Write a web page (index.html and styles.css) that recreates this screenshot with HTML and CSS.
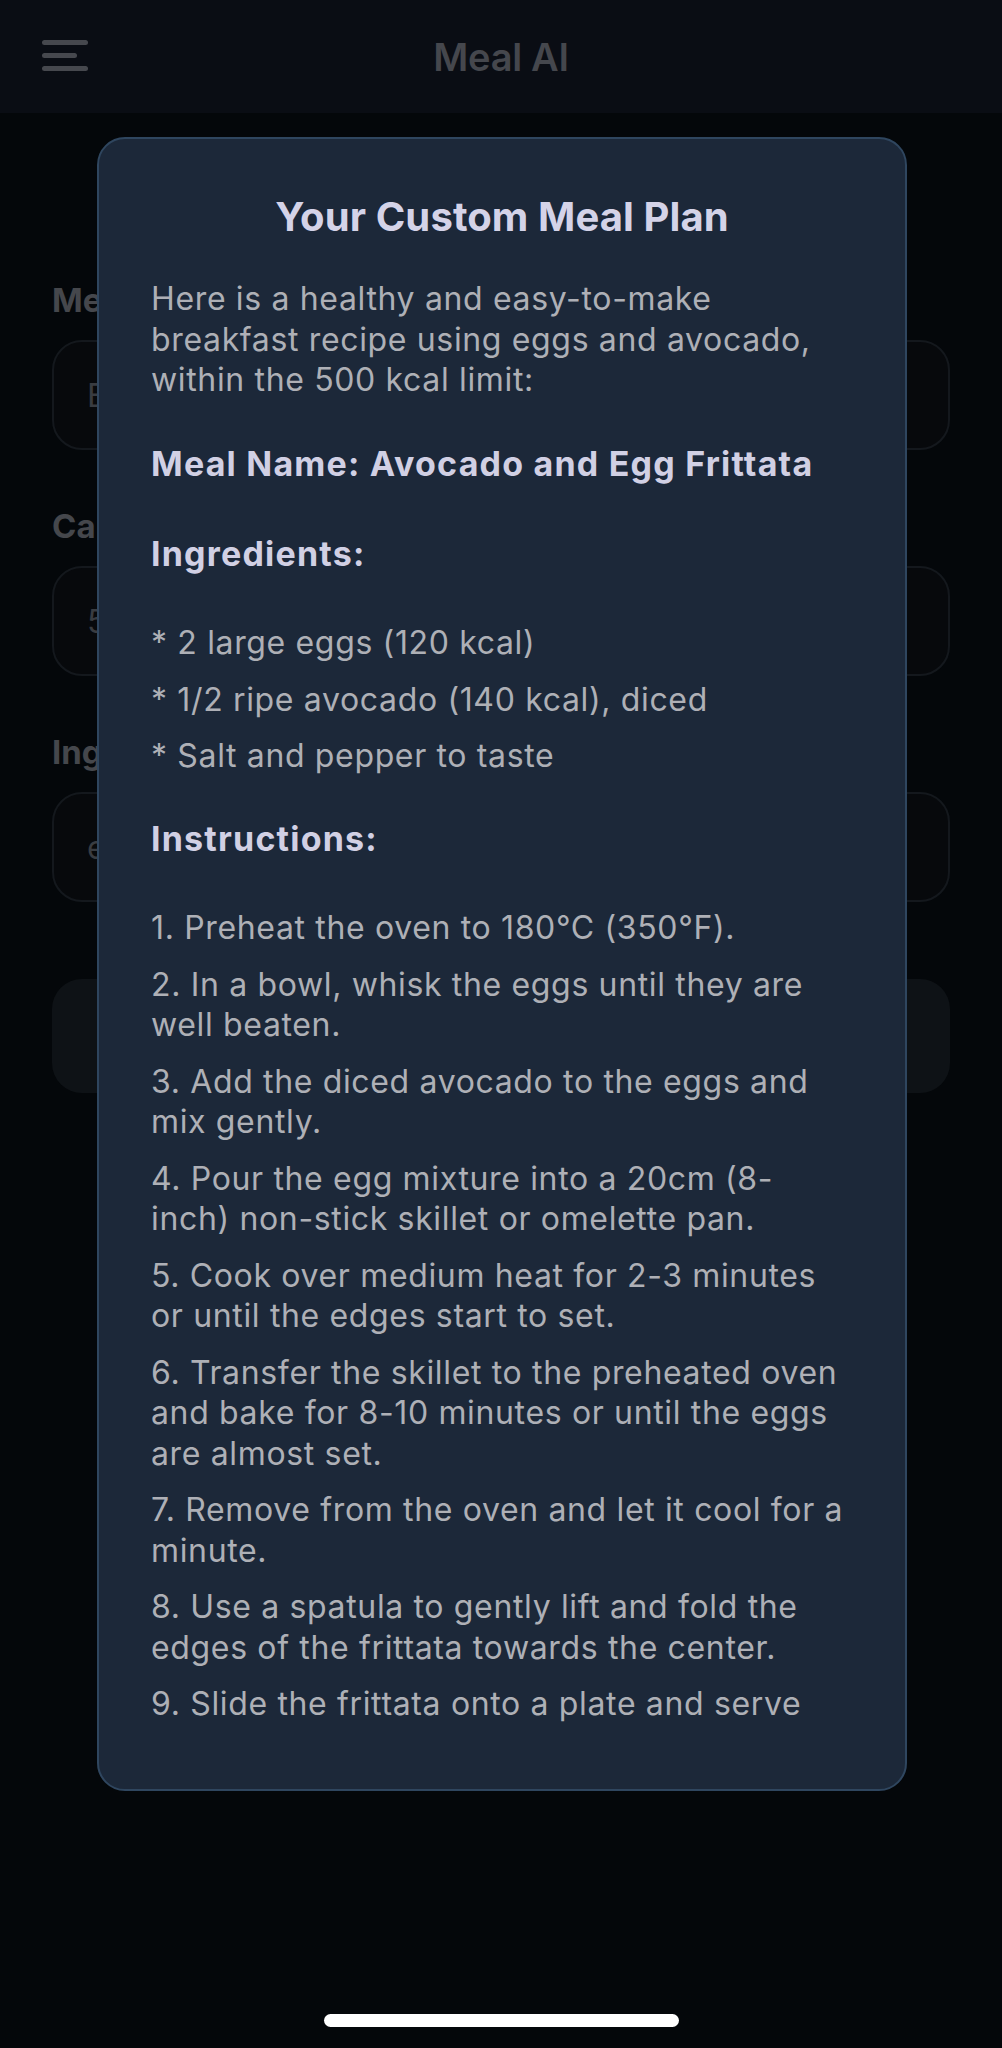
FILE: index.html
```html
<!DOCTYPE html>
<html lang="en">
<head>
<meta charset="utf-8">
<title>Meal AI</title>
<link rel="stylesheet" href="styles.css">
</head>
<body>
<div class="screen">
  <header class="topbar">
    <div class="menu" aria-label="Menu">
      <span class="bar"></span>
      <span class="bar short"></span>
      <span class="bar"></span>
    </div>
    <div class="app-title">Meal AI</div>
    <div class="spacer"></div>
  </header>

  <main class="form">
    <label class="field-label">Meal Type</label>
    <div class="input">Breakfast</div>

    <label class="field-label">Calories</label>
    <div class="input">500</div>

    <label class="field-label">Ingredients</label>
    <div class="input">eggs, avocado</div>

    <div class="button">Generate Meal Plan</div>
  </main>

  <section class="modal">
    <h1 class="modal-title">Your Custom Meal Plan</h1>
    <div class="scroll">
      <p class="txt">Here is a healthy and easy-to-make<br>breakfast recipe using eggs and avocado,<br>within the 500 kcal limit:</p>
      <p class="head gap-a">Meal Name: Avocado and Egg Frittata</p>
      <p class="head gap-b">Ingredients:</p>
      <p class="txt gap-c">* 2 large eggs (120 kcal)</p>
      <p class="txt item">* 1/2 ripe avocado (140 kcal), diced</p>
      <p class="txt item">* Salt and pepper to taste</p>
      <p class="head gap-d">Instructions:</p>
      <p class="txt gap-c">1. Preheat the oven to 180°C (350°F).</p>
      <p class="txt item">2. In a bowl, whisk the eggs until they are<br>well beaten.</p>
      <p class="txt item">3. Add the diced avocado to the eggs and<br>mix gently.</p>
      <p class="txt item">4. Pour the egg mixture into a 20cm (8-<br>inch) non-stick skillet or omelette pan.</p>
      <p class="txt item">5. Cook over medium heat for 2-3 minutes<br>or until the edges start to set.</p>
      <p class="txt item">6. Transfer the skillet to the preheated oven<br>and bake for 8-10 minutes or until the eggs<br>are almost set.</p>
      <p class="txt item">7. Remove from the oven and let it cool for a<br>minute.</p>
      <p class="txt item">8. Use a spatula to gently lift and fold the<br>edges of the frittata towards the center.</p>
      <p class="txt item">9. Slide the frittata onto a plate and serve<br>warm.</p>
    </div>
  </section>

  <div class="home-indicator"></div>
</div>
</body>
</html>
```

FILE: styles.css
```css
* { box-sizing: border-box; }

html, body {
  margin: 0;
  padding: 0;
  background: #04070a;
}

body {
  font-family: "Inter", "Noto Sans", sans-serif;
  width: 1002px;
  height: 2048px;
  overflow: hidden;
}

.screen {
  position: relative;
  width: 1002px;
  height: 2048px;
  background: #04070a;
}

/* ---------- top bar ---------- */
.topbar {
  height: 113px;
  background: #0a0d14;
  display: grid;
  grid-template-columns: 1fr auto 1fr;
  align-items: center;
  padding: 0 42px;
}

.menu {
  display: flex;
  flex-direction: column;
  gap: 8px;
  width: 46px;
  margin-top: -2px;
}

.bar {
  display: block;
  height: 5px;
  width: 46px;
  border-radius: 3px;
  background: #46484e;
}

.bar.short { width: 35px; }

.app-title {
  font-size: 38px;
  font-weight: 600;
  color: #45474d;
  letter-spacing: -0.3px;
}

/* ---------- underlying form ---------- */
.form {
  padding: 167px 52px 0;
  display: flex;
  flex-direction: column;
}

.field-label {
  font-size: 33px;
  line-height: 40px;
  font-weight: 700;
  color: #45474c;
  margin-bottom: 20px;
}

.input {
  height: 110px;
  border: 2px solid #14181d;
  border-radius: 30px;
  background: #07090c;
  padding: 0 33px;
  display: flex;
  align-items: center;
  font-size: 32px;
  color: #393c41;
  margin-bottom: 56px;
}

.form .input:nth-of-type(3) { margin-bottom: 77px; }

.button {
  height: 114px;
  border-radius: 30px;
  background: #0e1216;
  display: flex;
  align-items: center;
  justify-content: center;
  font-size: 32px;
  font-weight: 600;
  color: #0e1216;
}

/* ---------- modal ---------- */
.modal {
  position: absolute;
  left: 97px;
  top: 137px;
  width: 810px;
  height: 1654px;
  background: #1c2839;
  border: 2px solid #2f465f;
  border-radius: 28px;
  padding: 53.5px 52px 51px;
  display: flex;
  flex-direction: column;
}

.modal-title {
  margin: 0 0 38.5px;
  font-size: 40px;
  line-height: 48px;
  font-weight: 700;
  color: #d4d3e8;
  text-align: center;
  letter-spacing: 0.1px;
}

.scroll {
  flex: 1;
  overflow: hidden;
}

.scroll p {
  margin: 0;
  white-space: nowrap;
  line-height: 40.5px;
}

.txt {
  font-size: 32px;
  font-weight: 400;
  color: #aeb0b6;
  letter-spacing: 0.65px;
}

.head {
  font-size: 34px;
  font-weight: 700;
  color: #d1d0e4;
  letter-spacing: 1.2px;
}

.gap-a { margin-top: 43.5px !important; }
.gap-b { margin-top: 49.5px !important; }
.gap-c { margin-top: 48.5px !important; }
.gap-d { margin-top: 42.5px !important; }
.item { margin-top: 16px !important; }

/* ---------- home indicator ---------- */
.home-indicator {
  position: absolute;
  left: 324px;
  top: 2014px;
  width: 355px;
  height: 13px;
  border-radius: 7px;
  background: #ffffff;
}
```
